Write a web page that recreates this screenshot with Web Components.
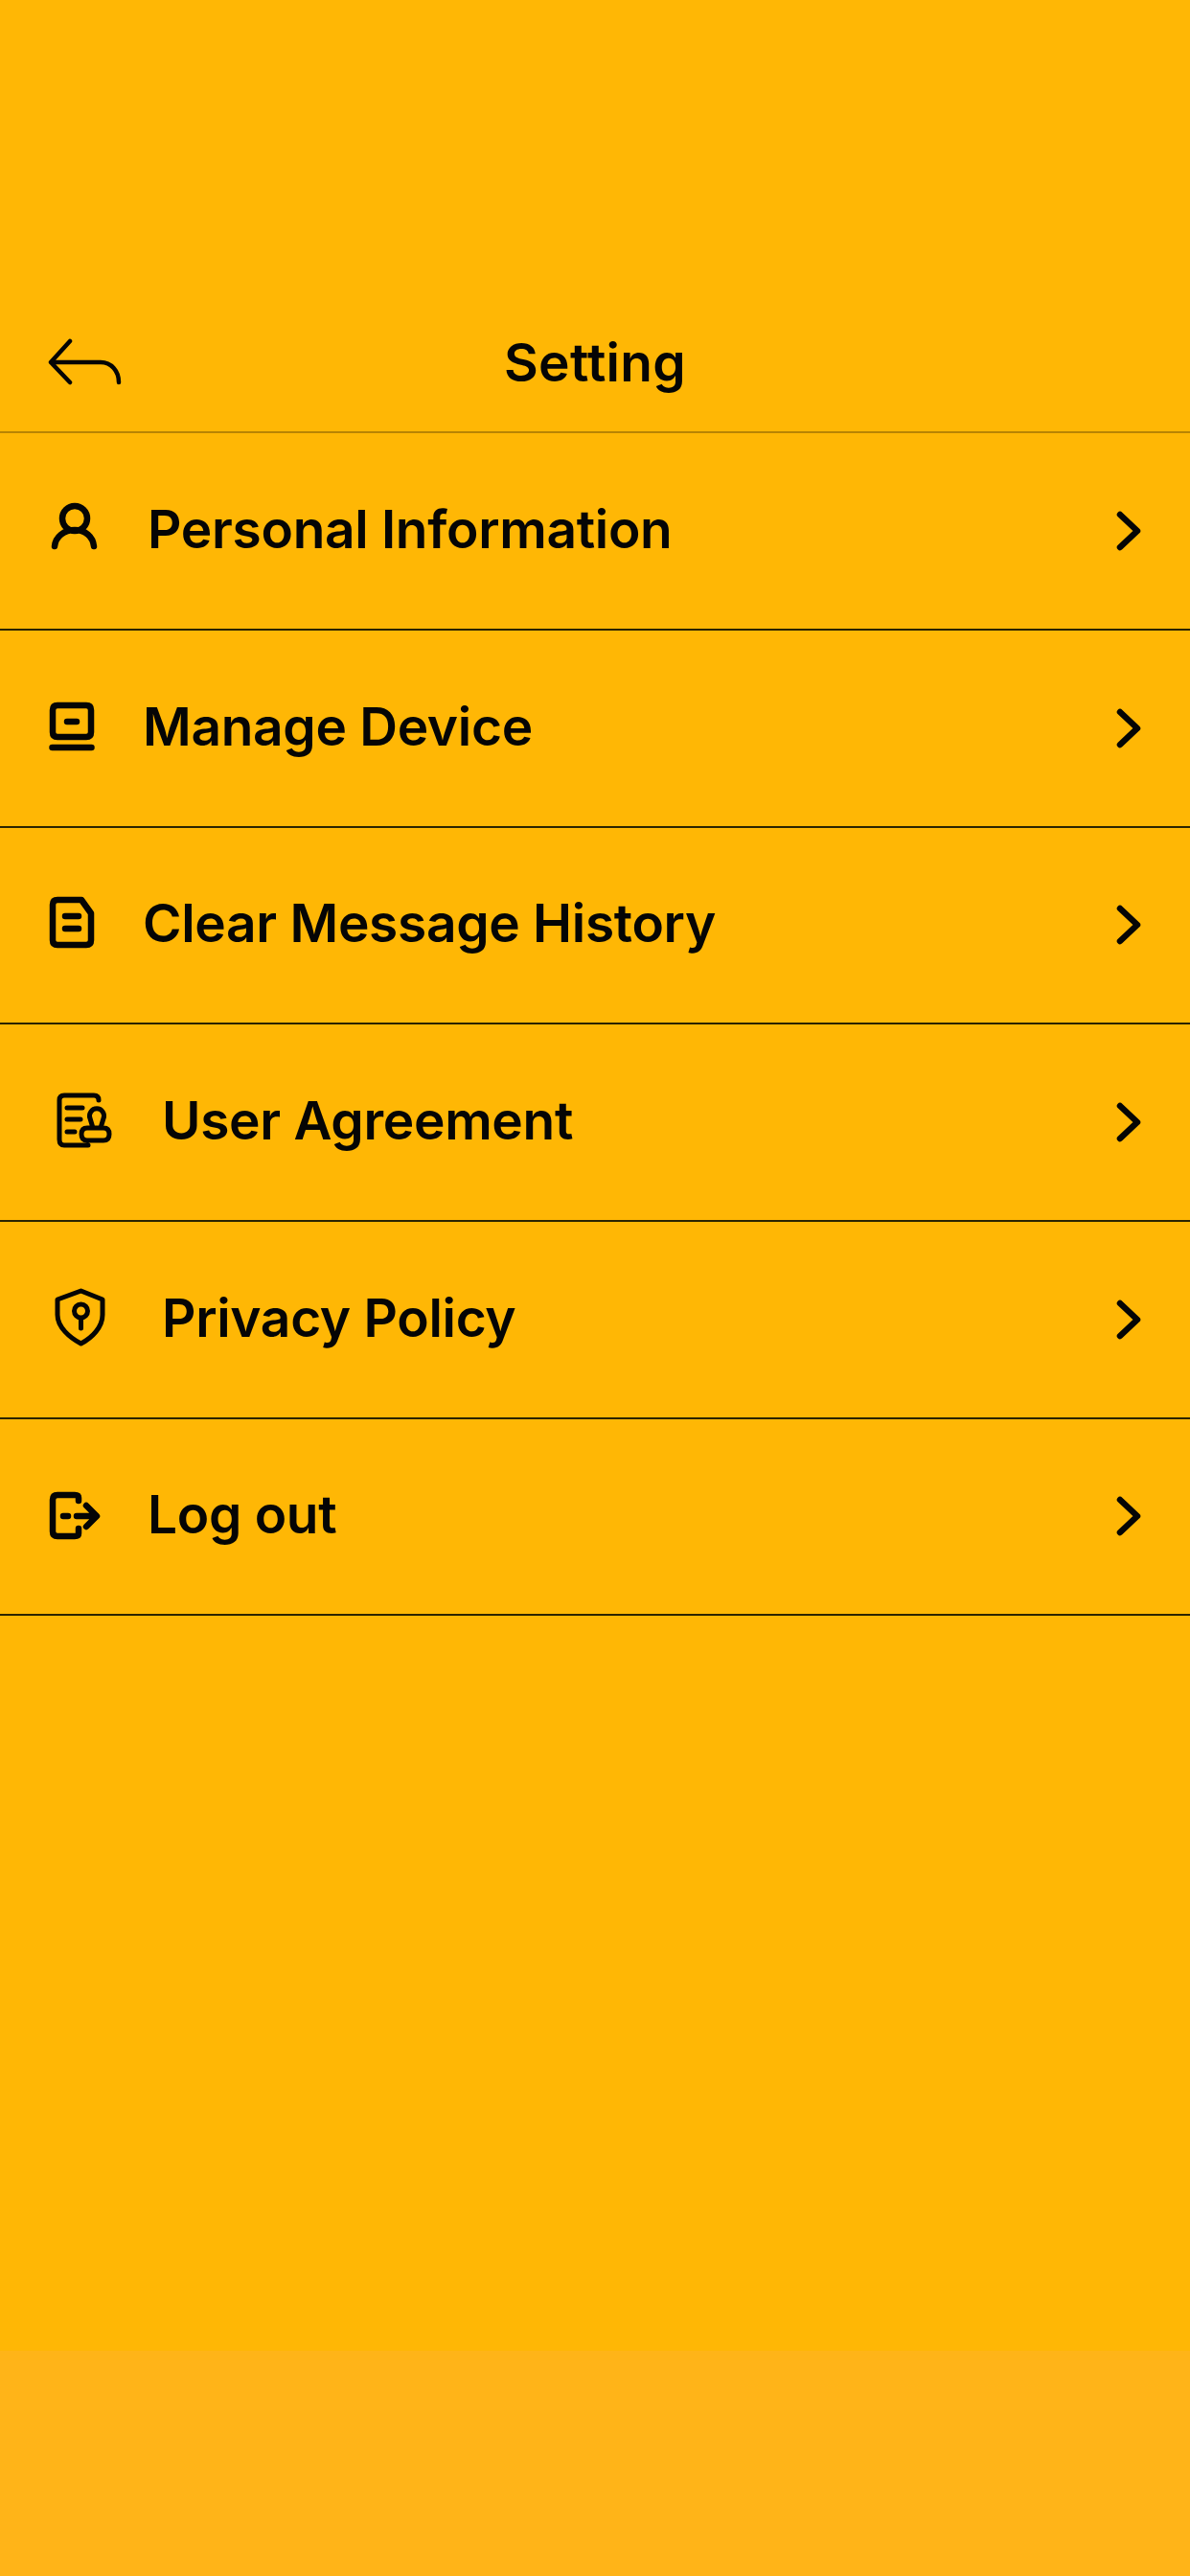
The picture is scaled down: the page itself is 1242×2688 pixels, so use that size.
<!DOCTYPE html>
<html lang="en">
<head>
<meta charset="utf-8">
<title>Setting</title>
<style>
  html, body { margin: 0; padding: 0; background: #FFB705; }
  body { font-family: "Inter", "Liberation Sans", sans-serif; color: #050505; }
</style>
</head>
<body>
<template id="screen-tpl">
  <style>
    :host { display: flex; flex-direction: column; width: 1242px; height: 2688px; background: #FFB705; overflow: hidden; }
    main { flex: 1; display: flex; flex-direction: column; }
    footer { height: 235px; background: #FFB418; }
  </style>
  <slot name="header"></slot>
  <main><slot></slot></main>
  <footer></footer>
</template>

<template id="header-tpl">
  <style>
    :host { display: block; height: 452.3px; box-sizing: border-box; padding-top: 304px; border-bottom: 2px solid rgba(0,0,0,.28); }
    .bar { display: grid; grid-template-columns: 1fr auto 1fr; align-items: center; height: 148px; padding: 0 50px; }
    svg { display: block; width: 80px; height: 60px; fill: none; stroke: #050505; stroke-width: 4.5; stroke-linecap: round; stroke-linejoin: round; }
    h1 { margin: 0; font-size: 55px; font-weight: 600; letter-spacing: 0.3px; line-height: 1; }
  </style>
  <div class="bar">
    <svg viewBox="50 348 80 60"><path d="M73 356 53 378 73 399M53 378H105C116 378 124 387 124 399"/></svg>
    <h1><slot></slot></h1>
    <span></span>
  </div>
</template>

<template id="row-tpl">
  <style>
    :host { display: flex; align-items: center; height: 205.67px; box-sizing: border-box; padding: 0 50px; border-bottom: 2px solid #2b2300; }
    .icon { flex: none; width: 70px; height: 80px; }
    .label { flex: 1; font-size: 55px; font-weight: 600; letter-spacing: -0.3px; line-height: 1; margin-left: var(--label-gap, 30px); padding-bottom: 3px; white-space: nowrap; }
    .chevron { flex: none; width: 30px; height: 50px; fill: none; stroke: #050505; stroke-width: 6.5; stroke-linecap: round; stroke-linejoin: round; }
  </style>
  <div class="icon"><slot name="icon"></slot></div>
  <div class="label"><slot></slot></div>
  <svg class="chevron" viewBox="0 0 30 50"><path d="M7 8 25 25 7 42"/></svg>
</template>

<script>
  class TemplatedElement extends HTMLElement {
    constructor(tplId) {
      super();
      this.attachShadow({ mode: 'open' });
      this.shadowRoot.appendChild(document.getElementById(tplId).content.cloneNode(true));
    }
  }

  class AppScreen extends TemplatedElement {
    constructor() { super('screen-tpl'); }
  }

  class NavHeader extends TemplatedElement {
    constructor() { super('header-tpl'); }
  }

  class SettingsRow extends TemplatedElement {
    constructor() { super('row-tpl'); }
    connectedCallback() {
      // icons differ in width in the reference, so the label offset varies per row
      const gap = this.getAttribute('gap');
      if (gap) this.style.setProperty('--label-gap', gap + 'px');
    }
  }

  const ICONS = {
    person: { w: 6.5, d: 'M65 541a13 13 0 1 0 26 0a13 13 0 1 0-26 0M57 570C58 560 67 553 78 553S97 560 98 570', y: 554 },
    device: { w: 6.5, d: 'M60 736H90Q95 736 95 741V764Q95 769 90 769H60Q55 769 55 764V741Q55 736 60 736ZM70 753H80M54.500 780H95.500', y: 760 },
    doc: { w: 6.5, d: 'M60 939H85L95 953V981Q95 986 90 986H60Q55 986 55 981V944Q55 939 60 939ZM68 956H82M68 969H82', y: 965 },
    agreement: { w: 5, d: 'M103 1148Q103 1143 98 1143H67Q62 1143 62 1148V1189Q62 1195 67 1195H92M70 1156H86M70 1168H84M70 1181H78M97 1177 94 1167A7.500 7.500 0 1 1 108 1167L105 1177M91 1177H108Q114 1177 114 1183.500T108 1190H91Q85 1190 85 1183.500T91 1177Z', y: 1171 },
    shield: { w: 5, d: 'M84.500 1346 107 1355V1371C107 1384 96 1395 84.500 1401C73 1395 60 1384 60 1371V1355ZM77.500 1367a7 7 0 1 0 14 0a7 7 0 1 0-14 0M84.500 1375V1385', y: 1376 },
    logout: { w: 6.5, d: 'M82 1566V1563Q82 1560 78 1560H60Q55 1560 55 1565V1598Q55 1603 60 1603H78Q82 1603 82 1600V1595M66 1582H71M80 1582H99M90 1571 101 1582 90 1593', y: 1582 }
  };

  class SettingsIcon extends HTMLElement {
    connectedCallback() {
      const icon = ICONS[this.getAttribute('name')];
      const root = this.shadowRoot || this.attachShadow({ mode: 'open' });
      root.innerHTML = `
        <style>
          :host { display: block; width: 70px; height: 80px; }
          svg { display: block; width: 70px; height: 80px; fill: none; stroke: #050505; stroke-linecap: round; stroke-linejoin: round; }
        </style>
        <svg viewBox="50 ${icon.y - 40} 70 80" stroke-width="${icon.w}"><path d="${icon.d}"/></svg>`;
    }
  }

  customElements.define('app-screen', AppScreen);
  customElements.define('nav-header', NavHeader);
  customElements.define('settings-row', SettingsRow);
  customElements.define('settings-icon', SettingsIcon);
</script>

<app-screen>
  <nav-header slot="header">Setting</nav-header>
  <settings-row gap="34"><settings-icon slot="icon" name="person"></settings-icon>Personal Information</settings-row>
  <settings-row gap="29"><settings-icon slot="icon" name="device"></settings-icon>Manage Device</settings-row>
  <settings-row gap="29"><settings-icon slot="icon" name="doc"></settings-icon>Clear Message History</settings-row>
  <settings-row gap="49"><settings-icon slot="icon" name="agreement"></settings-icon>User Agreement</settings-row>
  <settings-row gap="49"><settings-icon slot="icon" name="shield"></settings-icon>Privacy Policy</settings-row>
  <settings-row gap="34"><settings-icon slot="icon" name="logout"></settings-icon>Log out</settings-row>
</app-screen>
</body>
</html>
